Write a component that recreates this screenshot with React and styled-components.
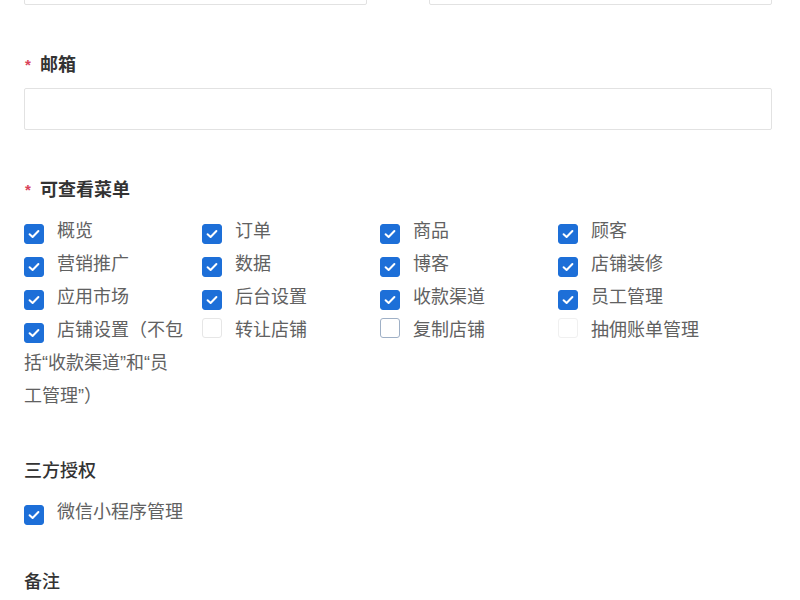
import React from 'react';
import styled, { createGlobalStyle } from 'styled-components';

const GlobalStyle = createGlobalStyle`
    body {
        margin: 0;
        background: #fff;
        font-family: "Liberation Sans", "Noto Sans CJK SC", sans-serif;
    }
`;

const Page = styled.div`
    width: 800px;
    height: 600px;
    overflow: hidden;
    background: #fff;
`;

const Form = styled.div`
    margin-top: -37px;
    padding: 0 28px 0 24px;
`;

const TopRow = styled.div`
    display: grid;
    grid-template-columns: 343px 343px;
    justify-content: space-between;
    margin-bottom: 46px;
`;

const Input = styled.div`
    height: 42px;
    box-sizing: border-box;
    border: 1px solid #e2e2e2;
    border-radius: 2px;
    background: #fff;
`;

const Field = styled.div`
    margin-bottom: ${(p) => p.gap || 46}px;
`;

const Label = styled.div`
    display: flex;
    align-items: center;
    height: 24px;
    font-size: 18px;
    font-weight: ${(p) => (p.light ? 500 : 600)};
    color: #333;
    margin-bottom: ${(p) => p.below || 13}px;
`;

const Star = styled.span`
    color: #d9435a;
    font-size: 15px;
    width: 15px;
    margin-left: 1px;
    line-height: 1;
    padding-top: 2px;
`;

const Grid = styled.div`
    display: grid;
    grid-template-columns: repeat(4, 178px);
`;

const Item = styled.div`
    width: 160px;
    font-size: 18px;
    line-height: 33px;
    color: #616161;
`;

const Box = styled.span`
    display: inline-flex;
    align-items: center;
    justify-content: center;
    width: 20px;
    height: 20px;
    box-sizing: border-box;
    margin-right: 13px;
    vertical-align: -2px;
    border-radius: 3px;
    background: ${(p) => (p.checked ? '#1d6fd8' : '#fff')};
    border: 1px solid ${(p) => (p.checked ? '#1d6fd8' : p.tone || '#e4e4e4')};
`;

function Check({ label, checked, tone }) {
    return (
        <Item>
            <Box checked={checked} tone={tone}>
                {checked && (
                    <svg width="12" height="10" viewBox="0 0 12 10">
                        <path d="M1.6 5.2 L4.6 8 L10.4 2" fill="none" stroke="#fff" strokeWidth="2" strokeLinecap="round" strokeLinejoin="round" />
                    </svg>
                )}
            </Box>
            {label}
        </Item>
    );
}

const menus = [
    { label: '概览', checked: true },
    { label: '订单', checked: true },
    { label: '商品', checked: true },
    { label: '顾客', checked: true },
    { label: '营销推广', checked: true },
    { label: '数据', checked: true },
    { label: '博客', checked: true },
    { label: '店铺装修', checked: true },
    { label: '应用市场', checked: true },
    { label: '后台设置', checked: true },
    { label: '收款渠道', checked: true },
    { label: '员工管理', checked: true },
    { label: '店铺设置（不包括“收款渠道”和“员工管理”）', checked: true },
    { label: '转让店铺', checked: false, tone: '#e6e6e6' },
    { label: '复制店铺', checked: false, tone: '#9fb0c6' },
    { label: '抽佣账单管理', checked: false, tone: '#f0f0f0' },
];

export default function App() {
    return (
        <>
            <GlobalStyle />
            <Page>
                <Form>
                    <TopRow>
                        <Input />
                        <Input />
                    </TopRow>

                    <Field>
                        <Label><Star>*</Star>邮箱</Label>
                        <Input />
                    </Field>

                    <Field gap={44}>
                        <Label below={15}><Star>*</Star>可查看菜单</Label>
                        <Grid>
                            {menus.map((m, i) => (
                                <Check key={i} label={m.label} checked={m.checked} tone={m.tone} />
                            ))}
                        </Grid>
                    </Field>

                    <Field gap={39}>
                        <Label light below={15}>三方授权</Label>
                        <Check label="微信小程序管理" checked />
                    </Field>

                    <Field>
                        <Label light>备注</Label>
                        <Input />
                    </Field>
                </Form>
            </Page>
        </>
    );
}
